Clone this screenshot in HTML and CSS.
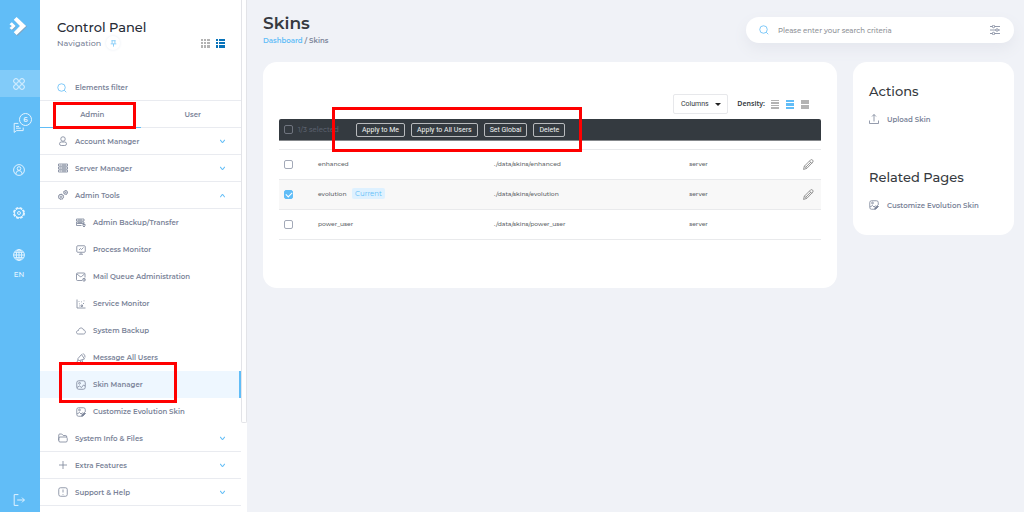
FILE: index.html
```html
<!DOCTYPE html>
<html lang="en">
<head>
<meta charset="utf-8">
<title>Skins</title>
<link rel="stylesheet" href="styles.css">
</head>
<body>
<svg class="sprite" aria-hidden="true">
  <symbol id="search" viewBox="0 0 20 20"><circle cx="9" cy="9" r="7.5"/><path d="M14.5 14.5l4 4"/></symbol>
  <symbol id="down" viewBox="0 0 20 20"><path d="M3 6c3 0 5 7 7 7s4-7 7-7"/></symbol>
  <symbol id="up" viewBox="0 0 20 20"><path d="M3 14c3 0 5-7 7-7s4 7 7 7"/></symbol>
  <symbol id="user" viewBox="0 0 20 20"><circle cx="10" cy="6" r="4.5"/><rect x="3" y="12" width="14" height="7" rx="3.5"/></symbol>
  <symbol id="server" viewBox="0 0 20 20"><path d="M1 2h18v4H1zM1 8h18v4H1zM1 14h18v4H1zM4 4h1M4 10h1M4 16h1M8 4h8M8 10h8M8 16h8"/></symbol>
  <symbol id="gears" viewBox="0 0 20 20"><circle cx="6" cy="13.5" r="4.8"/><circle cx="6" cy="13.500" r="5.300" stroke-dasharray="2 2.160"/><circle cx="6" cy="13.5" r="1.6"/><circle cx="15.3" cy="4.9" r="3.6"/><circle cx="15.300" cy="4.900" r="4.200" stroke-dasharray="1.600 1.700"/><circle cx="15.3" cy="4.9" r="1"/></symbol>
  <symbol id="backup" viewBox="0 0 20 20"><path d="M1 2h15v4H1zM1 8h15v3H1zM11 15H1v-4M4 4h8M4 9.5h8M16 11v7M13 15l3 3 3-3M13 13h6"/></symbol>
  <symbol id="monitor" viewBox="0 0 20 20"><rect x="1.5" y="1.5" width="17" height="13" rx="2"/><path d="M6 18.5h8M10 15v3M6 10l3-3 2 2 4-4"/></symbol>
  <symbol id="mail" viewBox="0 0 20 20"><path d="M12 17H3q-2 0-2-2V4q0-2 2-2h13q2 0 2 2v7M2 4l6 5q1.500 1 3 0l6-5"/><circle cx="16" cy="15.500" r="2.800"/><path d="M16 14v2h1.500"/></symbol>
  <symbol id="chart" viewBox="0 0 20 20"><path d="M2 1v17h17M6 14h1.500M10 12v3h3v-3zM7 9v1.500M11 5v1.500M16 3v1.500M15 8v2M6 4v1.500"/></symbol>
  <symbol id="cloud" viewBox="0 0 20 20"><path d="M5 16C-1 16 0 9 5 9c0-6 9-7 10-1 5 0 5 8 0 8z"/></symbol>
  <symbol id="horn" viewBox="0 0 20 20"><path d="M4 11l7-8 6 9-10 3q-5 0-3-4zM4 14l-2 4M8 15l2 4 3-1-1-4M13 2q5-1 5 7"/></symbol>
  <symbol id="picture" viewBox="0 0 20 20"><rect x="1.500" y="1.500" width="17" height="17" rx="4"/><circle cx="7" cy="6.500" r="1.800"/><path d="M2 15l5-3 4 3 4-5 3 2"/></symbol>
  <symbol id="paint" viewBox="0 0 20 20"><path d="M10 18.500H5q-3.500 0-3.500-3.500V5q0-3.500 3.500-3.500h10q3.500 0 3.500 3.500v5M2 14l5-3 3 3 3-3"/><circle cx="7" cy="6" r="1.800"/><path d="M11 19l1-4 5-4 2 2-5 5z" fill="currentColor"/></symbol>
  <symbol id="folder" viewBox="0 0 20 20"><path d="M1.500 15V4q0-2 2-2h4l3 3h5q2 0 2 3M4 18h12q2.500 0 2.500-3V11q0-3-2.500-3H4q-2.500 0-2.500 3v4q0 3 2.500 3z"/></symbol>
  <symbol id="plus" viewBox="0 0 20 20"><path d="M10 2v16M2 10h16"/></symbol>
  <symbol id="help" viewBox="0 0 20 20"><rect x="1.500" y="1.500" width="17" height="17" rx="3.500"/><path d="M10 5v6M10 14v1.500"/></symbol>
  <symbol id="pencil" viewBox="0 0 20 20"><path d="M1 19l1.500-6L14 1.500q2-1 3.500.5t.5 3.500L7 17zM12 4l4 4M2.500 13L7 17M14.500 5.500L5 15"/></symbol>
</svg>
<div class="app">
  <aside class="rail">
    <a class="logo" href="#" aria-label="Home"><svg viewBox="0 0 20 22"><path class="logo-shade" d="M9 3l10 8-10 10-3.500-3 7-7-6-5zM4 8l4 3-4 4-3-2z"/><path class="logo-mark" d="M8 1l10 9.500L8 20l-3-3 6.500-6.500L5 4zM3 6.500L7 10.500l-4 4-2.500-2L3 10.500l-2.500-2z"/></svg></a>
    <a class="rail-item active" href="#" aria-label="Menu"><svg viewBox="0 0 20 20"><circle cx="5" cy="5" r="4"/><circle cx="15" cy="5" r="4"/><circle cx="5" cy="15" r="4"/><circle cx="15" cy="15" r="4"/></svg></a>
    <a class="rail-item" href="#" aria-label="Messages"><svg viewBox="0 0 20 20"><path d="M9 4H2v15l4-3h11v-5M5 9h5M5 12h8"/></svg><span class="count">6</span></a>
    <a class="rail-item" href="#" aria-label="Profile"><svg viewBox="0 0 20 20"><circle cx="10" cy="10" r="9"/><circle cx="10" cy="7.500" r="3"/><path d="M5 17v-2q1-4 5-4t5 4v2"/></svg></a>
    <a class="rail-item" href="#" aria-label="Settings"><svg viewBox="0 0 20 20"><circle cx="10" cy="10" r="8.500" stroke-width="3" stroke-dasharray="4.450 2.220"/><circle cx="10" cy="10" r="7.500"/><circle cx="10" cy="10" r="2.500"/></svg></a>
    <a class="rail-item lang" href="#"><svg viewBox="0 0 20 20"><circle cx="10" cy="10" r="9"/><ellipse cx="10" cy="10" rx="4.500" ry="9"/><path d="M10 1v18M1 10h18M2.500 5.500h15M2.500 14.500h15"/></svg><span>EN</span></a>
    <a class="logout" href="#" aria-label="Log out"><svg viewBox="0 0 20 20"><path d="M9 1H2v18h7M7 10h12M15 6l4 4-4 4"/></svg></a>
  </aside>

  <nav class="panel">
    <div class="panel-body">
      <header class="panel-head">
        <h2>Control Panel</h2>
        <div class="nav-line"><span>Navigation</span>
          <button class="pin" aria-label="Pin"><svg viewBox="0 0 20 20"><path d="M4 2h12M6 2v8M14 2v8M2 11h16M10 11v8"/></svg></button>
          <button class="view" aria-label="Grid view"><svg viewBox="0 0 9 9"><path d="M0 0h2v2H0zM3 0h2v2H3zM6 0h3v2H6zM0 3h2v2H0zM3 3h2v2H3zM6 3h3v2H6zM0 6h2v3H0zM3 6h2v3H3zM6 6h3v3H6z"/></svg></button>
          <button class="view selected" aria-label="List view"><svg viewBox="0 0 9 9"><path d="M0 0h2v2H0zM3 0h6v2H3zM0 3h2v2H0zM3 3h6v2H3zM0 6h2v3H0zM3 6h6v3H3z"/></svg></button>
        </div>
      </header>
      <label class="filter"><svg><use href="#search"/></svg><input type="text" placeholder="Elements filter" aria-label="Elements filter"></label>
      <div class="tabs">
        <button class="tab active">Admin<span class="mark mark-tab"></span></button>
        <button class="tab">User</button>
      </div>
      <ul class="menu">
        <li><a class="group" href="#"><svg><use href="#user"/></svg><span>Account Manager</span><svg class="chev"><use href="#down"/></svg></a></li>
        <li><a class="group" href="#"><svg><use href="#server"/></svg><span>Server Manager</span><svg class="chev"><use href="#down"/></svg></a></li>
        <li><a class="group" href="#"><svg><use href="#gears"/></svg><span>Admin Tools</span><svg class="chev"><use href="#up"/></svg></a>
          <ul class="submenu">
            <li><a href="#"><svg><use href="#backup"/></svg>Admin Backup/Transfer</a></li>
            <li><a href="#"><svg><use href="#monitor"/></svg>Process Monitor</a></li>
            <li><a href="#"><svg><use href="#mail"/></svg>Mail Queue Administration</a></li>
            <li><a href="#"><svg><use href="#chart"/></svg>Service Monitor</a></li>
            <li><a href="#"><svg><use href="#cloud"/></svg>System Backup</a></li>
            <li><a href="#"><svg><use href="#horn"/></svg>Message All Users</a></li>
            <li><a class="current" href="#"><svg><use href="#picture"/></svg>Skin Manager<span class="mark mark-skin"></span></a></li>
            <li><a href="#"><svg><use href="#paint"/></svg>Customize Evolution Skin</a></li>
          </ul></li>
        <li><a class="group" href="#"><svg><use href="#folder"/></svg><span>System Info &amp; Files</span><svg class="chev"><use href="#down"/></svg></a></li>
        <li><a class="group" href="#"><svg><use href="#plus"/></svg><span>Extra Features</span><svg class="chev"><use href="#down"/></svg></a></li>
        <li><a class="group" href="#"><svg><use href="#help"/></svg><span>Support &amp; Help</span><svg class="chev"><use href="#down"/></svg></a></li>
      </ul>
    </div>
    <div class="track"><div class="thumb"></div></div>
  </nav>

  <main class="main">
    <header class="top">
      <div>
        <h1>Skins</h1>
        <div class="crumbs"><a href="#">Dashboard</a> / Skins</div>
      </div>
      <div class="search"><svg class="blue"><use href="#search"/></svg><input type="text" placeholder="Please enter your search criteria" aria-label="Search">
        <button aria-label="Search options"><svg viewBox="0 0 20 20"><path d="M0 3h5M9 3h11M0 10h12M16 10h4M0 17h5M9 17h11"/><circle cx="7" cy="3" r="2.500"/><circle cx="14" cy="10" r="2.500"/><circle cx="7" cy="17" r="2.500"/></svg></button></div>
    </header>
    <div class="content">
      <section class="card">
        <div class="tools">
          <button class="columns">Columns<span class="caret"></span></button>
          <b>Density:</b>
          <button class="density" aria-label="Compact"><svg viewBox="0 0 8 9"><path d="M0 0h8v1H0zM0 2h8v2H0zM0 5h8v1H0zM0 7h8v2H0z"/></svg></button>
          <button class="density on" aria-label="Normal"><svg viewBox="0 0 8 9"><path d="M0 0h8v2H0zM0 3h8v3H0zM0 7h8v2H0z"/></svg></button>
          <button class="density" aria-label="Wide"><svg viewBox="0 0 8 9"><path d="M0 0h8v4H0zM0 5h8v4H0z"/></svg></button>
        </div>
        <div class="bulk">
          <label class="pick"><input class="check" type="checkbox"><span>1/3 selected</span></label>
          <button>Apply to Me</button><button>Apply to All Users</button><button>Set Global</button><button>Delete</button>
          <span class="mark mark-bulk"></span>
        </div>
        <table class="skins">
          <colgroup><col class="c-check"><col class="c-name"><col class="c-path"><col class="c-type"><col class="c-edit"></colgroup>
          <tbody>
            <tr><td><input class="check" type="checkbox" aria-label="enhanced"></td><td>enhanced</td><td>./data/skins/enhanced</td><td>server</td><td><button class="edit" aria-label="Edit enhanced"><svg><use href="#pencil"/></svg></button></td></tr>
            <tr class="chosen"><td><input class="check" type="checkbox" checked aria-label="evolution"></td><td>evolution <span class="badge">Current</span></td><td>./data/skins/evolution</td><td>server</td><td><button class="edit" aria-label="Edit evolution"><svg><use href="#pencil"/></svg></button></td></tr>
            <tr><td><input class="check" type="checkbox" aria-label="power_user"></td><td>power_user</td><td>./data/skins/power_user</td><td>server</td><td></td></tr>
          </tbody>
        </table>
      </section>
      <aside class="side">
        <h3>Actions</h3>
        <a href="#"><svg viewBox="0 0 20 20"><path d="M1 13v6h18v-6M10 15V1M6 5l4-4 4 4"/></svg>Upload Skin</a>
        <h3>Related Pages</h3>
        <a href="#"><svg><use href="#paint"/></svg>Customize Evolution Skin</a>
      </aside>
    </div>
  </main>
</div>
</body>
</html>
```

FILE: styles.css
```css
* { box-sizing: border-box; }
body { margin: 0; background: #f0f2f7; color: #7a8398; font: 600 7px/13px Montserrat, Inter, "Open Sans", sans-serif; }
.sprite { position: absolute; width: 0; height: 0; }
svg { display: block; flex: none; width: 10px; height: 10px; fill: none; stroke: currentColor; stroke-width: 1.6; }
a { color: inherit; text-decoration: none; }
button { margin: 0; padding: 0; border: 0; background: none; color: inherit; font: inherit; }
input[type="text"] { flex: 1; min-width: 0; padding: 0; border: 0; outline: 0; background: none; color: inherit; font: inherit; }
input::placeholder { color: inherit; opacity: 1; }
ul { margin: 0; padding: 0; list-style: none; }
h1, h2, h3 { margin: 0; }
.app { display: flex; height: 100vh; min-height: 512px; overflow: hidden; }

.rail { display: flex; flex: none; flex-direction: column; width: 40px; background: #61bdf7; color: #e6f5ff; }
.rail svg { width: 12px; height: 12px; }
.logo { display: flex; justify-content: center; padding: 16px 3px 0 0; height: 70px; }
.rail .logo svg { width: 19px; height: 21px; stroke: none; }
.logo-mark { fill: #fff; }
.logo-shade { fill: #7ea7c4; }
.rail-item { position: relative; display: flex; align-items: center; justify-content: center; height: 27px; margin-bottom: 16px; padding-right: 2px; }
.rail-item.active { background: #81cbf9; }
.lang { flex-direction: column; gap: 7px; height: 38px; padding-top: 8px; font-weight: 500; }
.count { position: absolute; left: 19px; top: 0; width: 13px; height: 13px; border: 1px solid #e6f5ff; border-radius: 50%; background: #61bdf7; line-height: 11px; text-align: center; }
.logout { display: flex; justify-content: center; margin-top: auto; padding: 0 3px 6px 0; }

.panel { display: flex; flex: none; width: 207px; background: #fff; }
.panel-body { flex: 1; }
.track { width: 6px; }
.thumb { height: 423px; border: 1px solid #e3e4e8; border-top: 0; border-radius: 0 0 2px 2px; }
.panel-head { padding: 18px 16px 0 17px; height: 75px; }
.panel-head h2 { color: #272c36; font-size: 13px; font-weight: 500; line-height: 18px; }
.nav-line { display: flex; align-items: center; gap: 6px; height: 14px; font-size: 8px; font-weight: 500; }
.pin { display: flex; align-items: center; justify-content: center; width: 14px; height: 14px; margin: 0 auto 0 -1px; border-radius: 50%; box-shadow: 0 0 3px #e8edf3; color: #61bdf7; }
.pin svg { width: 7px; height: 7px; stroke-width: 2; }
.view svg { width: 9px; height: 9px; fill: #b3b3b3; stroke: none; }
.view.selected svg { fill: #0873b9; }
.filter { display: flex; align-items: center; gap: 8px; height: 26px; padding: 0 17px; border-bottom: 1px solid #e9ebf0; }
.filter svg, .blue { color: #61bdf7; }
.tabs { display: flex; height: 27px; border-bottom: 1px solid #e9ebf0; }
.tab { position: relative; flex: 1; padding-left: 4px; }
.tab.active { box-shadow: 0 1px #61bdf7; }
.group { display: flex; align-items: center; gap: 7px; height: 27px; padding: 0 15px 0 18px; border-bottom: 1px solid #e9ebf0; }
.group span { flex: 1; }
.group .chev { width: 7px; height: 7px; color: #61bdf7; stroke-width: 3; }
.submenu a { position: relative; display: flex; align-items: center; gap: 7px; height: 27px; padding-left: 36px; }
.submenu .current { border-right: 2px solid #61bdf7; background: #eef7ff; }

.mark { position: absolute; z-index: 1; border: 3px solid #f00; pointer-events: none; }
.mark-tab { inset: 1px 5px -2px 13px; }
.mark-skin { left: 19px; top: -9px; width: 118px; height: 41px; }
.mark-bulk { left: 53px; top: -12px; width: 250px; height: 45px; }

.main { flex: 1; min-width: 0; padding: 14px 10px 16px 16px; }
.top { display: flex; justify-content: space-between; height: 48px; }
h1 { color: #363a40; font-size: 17px; font-weight: 600; line-height: 19px; }
.crumbs { line-height: 16px; }
.crumbs a { color: #61bdf7; }
.search { display: flex; align-items: center; gap: 9px; width: 268px; height: 26px; margin-top: 3px; padding: 0 14px 0 13px; border-radius: 13px; background: #fff; box-shadow: 0 6px 14px #e5e7ee; color: #8d9096; font-weight: 500; }
.search svg { color: #7a8398; }
.search .blue { color: #61bdf7; }
.content { display: flex; align-items: flex-start; gap: 16px; }
.card { position: relative; flex: 1; min-width: 0; padding: 32px 16px 48px; border-radius: 14px; background: #fff; }
.tools { display: flex; align-items: center; justify-content: flex-end; gap: 7px; padding-right: 12px; color: #333940; font: 7px/10px "Noto Sans", sans-serif; }
.columns { display: flex; align-items: center; justify-content: center; gap: 6px; width: 55px; height: 20px; margin-right: 2px; border: 1px solid #e7e8eb; border-radius: 2px; font: 7px/10px Roboto, "Noto Sans", sans-serif; }
.caret { border: 3px solid transparent; border-top-color: #222; border-bottom: 0; }
.tools b { margin-right: -1px; font-weight: 600; }
.density svg { width: 8px; height: 9px; fill: #b3b3b3; stroke: none; }
.density.on svg { fill: #61bdf7; }
.bulk { position: relative; display: flex; align-items: center; gap: 6px; height: 22px; margin: 5px 0 8px; padding-left: 5px; border-bottom: 1px solid #85888b; border-radius: 2px 2px 0 0; background: #343a40; }
.bulk button { height: 14px; padding: 0 5px; border: 1px solid #b8babd; border-radius: 2px; color: #f1f2f3; font: 7px/10px Roboto, "Noto Sans", sans-serif; }
.pick { display: flex; align-items: center; gap: 5px; width: 66px; color: #5a606d; font-weight: 500; white-space: nowrap; }
.check { appearance: none; display: block; width: 9px; height: 9px; margin: 0; border: 1px solid #a3a9b8; border-radius: 2px; background: #fff; }
.pick .check { border-color: #70757f; background: none; }
.check:checked { border-color: #61bdf7; background: #61bdf7; }
.check:checked::after { content: ""; display: block; width: 5px; height: 3px; margin: 1px; border: solid #fff; border-width: 0 0 1px 1px; transform: rotate(-45deg); }
.skins { width: 100%; table-layout: fixed; border-collapse: collapse; color: #5c5f66; font-size: 6px; font-weight: 500; }
.c-check { width: 39px; }
.c-path { width: 36%; }
.c-type { width: 21%; }
.c-edit { width: 18px; }
.skins td { height: 30px; padding: 0; border-top: 1px solid #e9eaec; border-bottom: 1px solid #e9eaec; }
.skins td:first-child { padding-left: 5px; }
.chosen { background: #f8f8f8; }
.badge { display: inline-block; margin-left: 4px; padding: 0 3px; border-radius: 2px; background: #def1ff; color: #61bdf7; font-size: 7px; font-weight: 400; line-height: 11px; }
.edit { display: block; color: #888; }
.edit svg { width: 11px; height: 11px; }
.side { flex: none; width: 161px; padding: 20px 16px 23px; border-radius: 14px; background: #fff; }
.side h3 { color: #363a40; font-size: 13px; font-weight: 500; line-height: 18px; }
.side a { display: flex; align-items: center; gap: 8px; height: 14px; margin-top: 12px; }
.side a + h3 { margin-top: 42px; }
```
